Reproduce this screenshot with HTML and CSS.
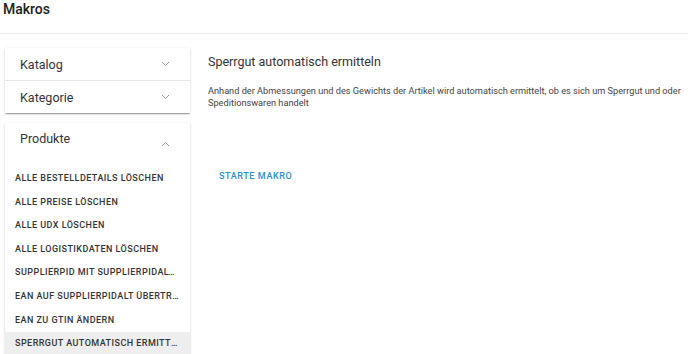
FILE: index.html
```html
<!DOCTYPE html>
<html lang="de">
<head>
  <meta charset="UTF-8">
  <title>Makros</title>
  <link rel="stylesheet" href="styles.css">
</head>
<body>
  <header class="page-header">
    <h1>Makros</h1>
  </header>

  <div class="layout">
    <aside class="sidebar">
      <div class="panel-group">
        <div class="panel">
          <div class="panel-head">
            <span>Katalog</span>
            <svg class="chevron" width="9" height="6" viewBox="0 0 9 6"><path d="M1 1 L4.5 4.5 L8 1" fill="none" stroke="#9e9e9e" stroke-width="1"/></svg>
          </div>
        </div>
        <div class="panel">
          <div class="panel-head">
            <span>Kategorie</span>
            <svg class="chevron" width="9" height="6" viewBox="0 0 9 6"><path d="M1 1 L4.5 4.5 L8 1" fill="none" stroke="#9e9e9e" stroke-width="1"/></svg>
          </div>
        </div>
      </div>

      <div class="panel-group">
        <div class="panel open">
          <div class="panel-head tall">
            <span>Produkte</span>
            <svg class="chevron" width="9" height="6" viewBox="0 0 9 6"><path d="M1 5 L4.5 1.5 L8 5" fill="none" stroke="#9e9e9e" stroke-width="1"/></svg>
          </div>
          <ul class="macro-list">
            <li>Alle Bestelldetails löschen</li>
            <li>Alle Preise löschen</li>
            <li>Alle UDX löschen</li>
            <li>Alle Logistikdaten löschen</li>
            <li>SupplierPID mit SupplierPIDALT ersetzen</li>
            <li>EAN auf SupplierPIDALT übertragen</li>
            <li>EAN zu GTIN ändern</li>
            <li class="active">Sperrgut automatisch ermitteln</li>
          </ul>
        </div>
      </div>
    </aside>

    <main class="content">
      <h2>Sperrgut automatisch ermitteln</h2>
      <p class="desc">Anhand der Abmessungen und des Gewichts der Artikel wird automatisch ermittelt, ob es sich um Sperrgut und oder Speditionswaren handelt</p>
      <button class="run-btn">Starte Makro</button>
    </main>
  </div>
</body>
</html>
```

FILE: styles.css
```css
* { margin: 0; padding: 0; box-sizing: border-box; }
body {
  font-family: Roboto, "Liberation Sans", sans-serif;
  color: #212121;
  background: #fff;
  overflow: hidden;
}
.page-header {
  height: 34px;
  padding: 1px 3px 0;
  border-bottom: 1px solid #ececec;
}
.page-header h1 {
  font-size: 14px;
  font-weight: 500;
  line-height: 16px;
}
.layout {
  display: flex;
  padding-top: 14px;
}
.sidebar {
  width: 185px;
  margin-left: 5px;
  flex-shrink: 0;
}
.panel-group {
  margin-bottom: 10px;
  box-shadow: 0 2px 1px -1px rgba(0,0,0,.2), 0 1px 1px 0 rgba(0,0,0,.14), 0 1px 3px 0 rgba(0,0,0,.12);
  background: #fff;
}
.panel + .panel { border-top: 1px solid #e4e4e4; }
.panel-head {
  height: 32px;
  display: flex;
  align-items: center;
  justify-content: space-between;
  padding: 0 20px 0 15px;
  font-size: 12.5px;
  color: #333;
}
.panel-head.tall {
  height: 44px;
  align-items: flex-start;
  padding-top: 8px;
}
.panel-head.tall .chevron { margin-top: 10px; }
.macro-list { list-style: none; }
.macro-list li {
  height: 23.6px;
  line-height: 23.6px;
  padding: 0 10px;
  font-size: 9px;
  font-weight: 500;
  letter-spacing: 0.45px;
  text-transform: uppercase;
  color: #333;
  white-space: nowrap;
  overflow: hidden;
  text-overflow: ellipsis;
}
.macro-list li.active { background: #eeeeee; }
.content {
  flex: 1;
  padding: 6px 6px 0 18px;
}
.content h2 {
  font-size: 12.5px;
  font-weight: 400;
  color: #333;
  line-height: 16px;
}
.desc {
  margin-top: 15px;
  font-size: 9.2px;
  line-height: 12px;
  color: #444;
}
.run-btn {
  margin-top: 58px;
  border: none;
  background: none;
  font-family: inherit;
  font-size: 9px;
  font-weight: 500;
  letter-spacing: 0.6px;
  text-transform: uppercase;
  color: #2a8fd8;
  padding: 4px 11px;
  cursor: pointer;
}
```
